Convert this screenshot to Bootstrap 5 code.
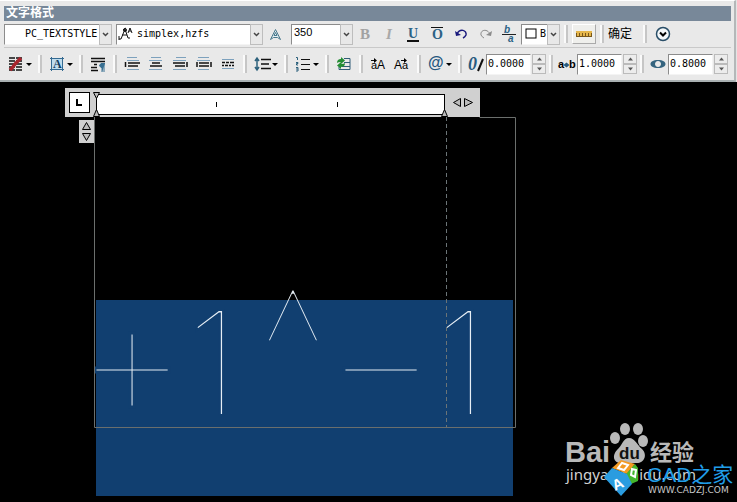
<!DOCTYPE html>
<html lang="zh-CN">
<head>
<meta charset="utf-8">
<meta name="viewport" content="width=device-width, initial-scale=1">
<title>文字格式</title>
<link href="https://cdn.jsdelivr.net/npm/bootstrap@5.3.0/dist/css/bootstrap.min.css" rel="stylesheet">
<style>
body{background:#000;font:12px/16px "Liberation Sans","Noto Sans CJK SC",sans-serif;color:#000}
.panel{background:#e9e9e9;border-bottom:2px solid #a9b0b2;border-right:2px solid #b4b8b9;margin-right:1px;padding:5px 3px 0 4px;border-top:1px solid #fff}
.dock{background:#e4e4e4}
.titlebar{background:#788899;color:#fff;font-size:12px;font-weight:700;height:15px;line-height:15px;padding-left:2px;margin:0}
.bar1{height:27px;border-bottom:1px solid #c9c9c9}
.bar2{height:32px}
.tool{border:0;background:none;padding:0;width:24px;height:24px;flex:none;display:flex;align-items:center;justify-content:center;color:#000}
.tool.split{width:31px}
.tool.raised{border:1px solid;border-color:#fff #aaa #aaa #fff;height:20px;background:#efefec}
.rule{width:10px;flex:none;height:18px;display:flex;justify-content:center}
.rule::before{content:"";width:4px;background:#fafafa;border-right:2px solid #c6c6c6}
.rule.wide{width:12px}
.combo{display:grid;flex:none;height:21px}
.combo>*{grid-area:1/1}
.combo select{appearance:none;border:1px solid;border-color:#8c8c8c #f4f4f4 #f4f4f4 #8c8c8c;background:#fff;border-radius:0;padding:0 13px 0 20px;font:10px/18px "DejaVu Sans Mono",monospace;color:#000;width:100%;min-width:0;overflow:hidden}
.arrow{justify-self:end;width:13px;background:#e8e8e8;border:1px solid #bdbdbd;pointer-events:none;display:flex;align-items:center;justify-content:center}
.lead-icon{justify-self:start;align-self:center;margin-left:2px;pointer-events:none}
.w-style{width:108px}.w-font{width:147px}.w-size{width:62px}.w-color{width:39px}
.combo.w-size select{padding-left:2px;font:11px/14px "Liberation Sans",sans-serif;padding-bottom:4px}
.combo.w-color select{padding-left:18px}
.numlabel{width:21px;flex:none;display:flex;justify-content:center;align-items:center}
.num{width:45px;height:21px;border:1px solid;border-color:#8c8c8c #f4f4f4 #f4f4f4 #8c8c8c;background:#fff;padding:0 0 1px 1px;font:10px/18px "DejaVu Sans Mono",monospace;color:#000;border-radius:0;flex:none}
.spin{width:15px;flex:none;display:flex;flex-direction:column;padding-left:1px}
.spin button{height:10px;padding:0;border:1px solid #bbb;background:#ececec;display:flex;align-items:center;justify-content:center}
.okbtn{border:0;background:none;padding:0;font-size:12px;color:#000;margin-right:7px;flex:none}
.ruler{background:#d0d0d0;margin:6px 0 0 65px;width:415px;height:29px;padding:4px}
.tabstop{width:21px;height:21px;border:1px solid #000;background:#fff;padding:0;display:flex;align-items:center;justify-content:center;flex:none}
.nudge{background:#d0d0d0;border:0;padding:0;display:flex}
.vnudge{background:#d0d0d0;width:15px;height:23px;margin:3px 0 0 79px;flex:none}
.glyphs{font-family:Inter,Roboto,sans-serif;font-weight:100;fill:#e6eef5;stroke:#113f70;stroke-width:2px}
.glyphs .op{font-size:180px;stroke-width:3px}
.glyphs .caret{font-size:172px;stroke:url(#edge);stroke-width:3px}
.brandmark{position:absolute;right:0;bottom:0}
svg{display:block;flex:none}
</style>
</head>
<body class="d-flex flex-column min-vh-100 position-relative overflow-hidden">
<header class="dock">
<div class="panel">
<h1 class="titlebar">文字格式</h1>
<div class="bar1 d-flex align-items-center" role="toolbar" aria-label="字符">
<div class="combo w-style"><select aria-label="样式"><option>PC_TEXTSTYLE</option></select><span class="arrow"><svg width="7" height="5"><path d="M1 1l2.500 2.500L6 1" fill="none" stroke="#444" stroke-width="1.500"/></svg></span></div>
<div class="combo w-font ms-1"><select aria-label="字体"><option>simplex,hzfs</option></select><svg class="lead-icon" width="15" height="15" fill="none" stroke="#111"><path d="M1 12h2l4-10 3 9h2M4 8h5M5 3l3-2M10 6l2-5 2 5M11 4h2M1 9v4"/><circle cx="7" cy="3" r="1.500"/></svg><span class="arrow"><svg width="7" height="5"><path d="M1 1l2.500 2.500L6 1" fill="none" stroke="#444" stroke-width="1.500"/></svg></span></div>
<button class="tool" aria-label="注释性"><svg width="13" height="13" fill="#e5f1f5" stroke="#49788c"><path d="M1.500 11.500L6.500 1.500l5 10-3-2h-4z"/><path d="M5 7.500h3l-1.500-3z"/></svg></button>
<div class="combo w-size ms-1"><select aria-label="高度"><option>350</option></select><span class="arrow"><svg width="7" height="5"><path d="M1 1l2.500 2.500L6 1" fill="none" stroke="#444" stroke-width="1.500"/></svg></span></div>
<button class="tool" disabled aria-label="粗体"><svg width="18" height="18"><text x="4" y="14" font-family="Liberation Serif,serif" font-size="15" font-weight="700" fill="#a2a2a2">B</text></svg></button>
<button class="tool" disabled aria-label="斜体"><svg width="18" height="18"><text x="6" y="14" font-family="Liberation Serif,serif" font-size="15" font-style="italic" font-weight="700" fill="#a8a8a8">I</text></svg></button>
<button class="tool" aria-label="下划线"><svg width="18" height="18"><text x="4" y="13" font-family="Liberation Serif,serif" font-size="14" font-weight="700" fill="#2c6286">U</text><path d="M3 16h12" stroke="#111" stroke-width="2"/></svg></button>
<button class="tool" aria-label="上划线"><svg width="18" height="20"><path d="M3 3.500h12" stroke="#111" stroke-width="1"/><text x="4" y="15" font-family="Liberation Serif,serif" font-size="14" font-weight="700" fill="#2c6286">O</text></svg></button>
<button class="tool" aria-label="放弃"><svg width="15" height="12" fill="none" stroke="#19197c" stroke-width="1.500"><path d="M3 6C6 0 13 2 12 7q-1 2-3 3"/><path d="M1 3l1 5 5-1z" fill="#19197c" stroke="none"/></svg></button>
<button class="tool" aria-label="重做"><svg width="15" height="12" fill="none" stroke="#8b8b8b"><path d="M12 6C9 0 2 2 3 7q1 2 3 3"/><path d="M14 3l-1 5-5-1z" fill="#8b8b8b" stroke="none"/></svg></button>
<button class="tool" aria-label="堆叠"><svg width="20" height="22" font-family="Liberation Sans,sans-serif" font-size="10" font-style="italic" font-weight="700"><text x="5" y="10" fill="#2c6286">b</text><text x="9" y="19" fill="#2c6286">a</text><path d="M3 11.500h14" stroke="#222"/></svg></button>
<div class="combo w-color"><select aria-label="颜色"><option>ByLayer</option></select><svg class="lead-icon ms-1" width="12" height="12"><rect x="1" y="1" width="10" height="9" fill="#fff" stroke="#000"/></svg><span class="arrow"><svg width="7" height="5"><path d="M1 1l2.500 2.500L6 1" fill="none" stroke="#444" stroke-width="1.500"/></svg></span></div>
<span class="rule wide"></span>
<button class="tool raised" aria-label="标尺"><svg width="18" height="8"><rect x="1" y="1" width="16" height="5" fill="#e5b64b"/><path d="M1 6.500h16M1.500 3v4M4.500 3v4M7.500 3v4M10.500 3v4M13.500 3v4M16.500 3v4" stroke="#78571b"/></svg></button>
<span class="rule wide"></span>
<button class="okbtn">确定</button>
<span class="rule wide"></span>
<button class="tool" aria-label="选项"><svg width="16" height="16" fill="none"><circle cx="8" cy="8" r="6.500" stroke="#294e68" fill="#f3f7f9" stroke-width="1.500"/><path d="M5 6.500l3 3 3-3" stroke="#000" stroke-width="2"/></svg></button>
</div>
<div class="bar2 d-flex align-items-center" role="toolbar" aria-label="段落">
<button class="tool split" aria-label="列"><svg width="24" height="16"><path d="M1 2h6m1 0h6M1 5h6m1 0h6M1 8h6m1 0h6M1 11h6m1 0h6M1 14h6m1 0h6" stroke="#111" stroke-width="1.500"/><path d="M2 14l3-3 2-3 6-6" stroke="#a8242d" stroke-width="3.500" fill="none"/><path d="M18 7h6l-3 3z"/></svg></button>
<span class="rule"></span>
<button class="tool split" aria-label="多行文字对正"><svg width="24" height="16"><rect x="2" y="2" width="12" height="12" fill="#bfdced"/><path d="M1 2.500h14M1 13.500h14M2.500 1v14M13.500 1v14" stroke="#346a91"/><text x="4" y="12" font-family="Liberation Serif,serif" font-weight="700" font-size="12" fill="#123d5d">A</text><path d="M18 7h6l-3 3z"/></svg></button>
<span class="rule"></span>
<button class="tool" aria-label="段落"><svg width="16" height="15"><path d="M1 1.500h14M1 4.500h14M4 7.500h3M1 10.500h6M1 13.500h7" stroke="#111" stroke-width="1.500"/><path d="M15 6.500h-4q-3 2 0 4h1V15m2-8v8" stroke="#397092" fill="#397092" stroke-width="1"/></svg></button>
<span class="rule"></span>
<button class="tool" aria-label="左对齐"><svg width="16" height="16"><path d="M3 1.500h10M3 4.500h12M3 13.500h12" stroke="#7da1bd"/><path d="M4 7h12M4 10h10M1.500 6v5" stroke="#111" stroke-width="1.500"/></svg></button>
<button class="tool" aria-label="居中"><svg width="16" height="16"><path d="M3 1.500h10M1 4.500h13M1 13.500h13" stroke="#7da1bd"/><path d="M4 7h8M2 10h12" stroke="#111" stroke-width="1.500"/></svg></button>
<button class="tool" aria-label="右对齐"><svg width="16" height="16"><path d="M4 1.500h10M1 4.500h13M1 13.500h13" stroke="#7da1bd"/><path d="M1 7h12M3 10h10M15 6v5" stroke="#111" stroke-width="1.500"/></svg></button>
<button class="tool" aria-label="对正"><svg width="16" height="16"><path d="M2 1.500h11M1 4.500h13M2 13.500h11" stroke="#7da1bd"/><path d="M3 7h10M3 10h10M1 6v5M15 6v5" stroke="#111" stroke-width="1.500"/></svg></button>
<button class="tool" aria-label="分布"><svg width="16" height="16"><path d="M2 3.500h12M2 12.500h12" stroke="#7da1bd"/><path d="M2 6.500h3m1 0h3m1 0h4M2 9.500h2m1 0h3m1 0h2m1 0h2" stroke="#111" stroke-width="1.500"/></svg></button>
<span class="rule"></span>
<button class="tool split" aria-label="行距"><svg width="24" height="16"><path d="M3 2v12M1 5l2-3 2 3M1 11l2 3 2-3" stroke="#2d617c" fill="none" stroke-width="1.500"/><path d="M7 3.500h10M7 8h8M7 12.500h10" stroke="#111" stroke-width="1.500"/><path d="M18 7h6l-3 3z"/></svg></button>
<span class="rule"></span>
<button class="tool split" aria-label="编号"><svg width="24" height="16"><path d="M1 1.500h1.500V4M1 6.500h2v1H1.500V9H3M1 11.500h2V15H1M1 13h2" stroke="#2d617c" fill="none"/><path d="M6 3.500h9M6 8.500h9M6 13.500h9" stroke="#111"/><path d="M18 7h6l-3 3z"/></svg></button>
<span class="rule"></span>
<button class="tool" aria-label="插入字段"><svg width="16" height="16"><path d="M8 2.500h6v11H3V11M8 6.500h6M6 10.500h8" stroke="#315d78" fill="none"/><path d="M1 7q0-4 4-4V1l4 3.500L5 8V6Q2 6 1 7zM9 7q0 4-4 4v2L1 9.500 5 6v2q3 0 4-1z" fill="#258d35"/></svg></button>
<span class="rule"></span>
<button class="tool" aria-label="大写"><svg width="18" height="16" font-family="Liberation Sans,sans-serif"><text x="2" y="13" font-size="11">a</text><text x="8" y="13" font-size="12">A</text><path d="M2 4.500h4" stroke="#111"/><path d="M5 2v5l3-2.500z"/></svg></button>
<button class="tool" aria-label="小写"><svg width="18" height="16" font-family="Liberation Sans,sans-serif"><text x="1" y="13" font-size="12">A</text><text x="9" y="13" font-size="11">a</text><path d="M8 4.500h4" stroke="#111"/><path d="M11 2v5l3-2.500z"/></svg></button>
<span class="rule"></span>
<button class="tool split" aria-label="符号"><svg width="24" height="20"><text x="0" y="14" font-family="Liberation Sans,sans-serif" font-size="16" font-weight="700" fill="#255780">@</text><path d="M18 9h6l-3 3z"/></svg></button>
<span class="rule"></span>
<label class="numlabel" for="oblique" aria-label="倾斜角度"><svg width="19" height="22"><text x="2" y="17" font-family="Liberation Serif,serif" font-style="italic" font-weight="700" font-size="18" fill="#285a7e">0</text><path d="M12 18l5-12" stroke="#111" stroke-width="2"/></svg></label>
<input class="num" id="oblique" value="0.0000">
<div class="spin"><button aria-label="增加"><svg width="7" height="4"><path d="M1 3.500l2.500-3 2.500 3z" fill="#555"/></svg></button><button aria-label="减少"><svg width="7" height="4"><path d="M1 .5l2.500 3 2.500-3z" fill="#555"/></svg></button></div>
<span class="rule"></span>
<label class="numlabel" for="tracking" aria-label="追踪"><svg width="19" height="16"><text x="1" y="12" font-family="Liberation Sans,sans-serif" font-size="11" font-weight="700">a</text><text x="12" y="12" font-family="Liberation Sans,sans-serif" font-size="11" font-weight="700">b</text><path d="M6.500 9l3-2.500v5zM12.500 9l-3-2.500v5z" fill="#285a7e"/></svg></label>
<input class="num" id="tracking" value="1.0000">
<div class="spin"><button aria-label="增加"><svg width="7" height="4"><path d="M1 3.500l2.500-3 2.500 3z" fill="#555"/></svg></button><button aria-label="减少"><svg width="7" height="4"><path d="M1 .5l2.500 3 2.500-3z" fill="#555"/></svg></button></div>
<span class="rule"></span>
<label class="numlabel" for="widthfactor" aria-label="宽度因子"><svg width="16" height="12"><path fill-rule="evenodd" d="M8 2C-2 2-2 10 8 10S18 2 8 2zm0 1c4 0 4 6 0 6S4 3 8 3z" fill="#35647f"/></svg></label>
<input class="num" id="widthfactor" value="0.8000">
<div class="spin"><button aria-label="增加"><svg width="7" height="4"><path d="M1 3.500l2.500-3 2.500 3z" fill="#555"/></svg></button><button aria-label="减少"><svg width="7" height="4"><path d="M1 .5l2.500 3 2.500-3z" fill="#555"/></svg></button></div>
</div>
</div>
</header>
<main>
<div class="ruler d-flex">
<button class="tabstop" aria-label="制表符"><svg width="7" height="8"><path d="M1 0v6h5" fill="none" stroke="#000" stroke-width="2"/></svg></button>
<svg width="350" height="27" viewBox="94 90 350 27" class="ms-1 overflow-visible"><rect x="96.500" y="92.500" width="348" height="20" fill="#fff" stroke="#000"/><path d="M216.500 100v5M337.500 100v5" stroke="#000"/><path d="M93.500 90.500h6l-3 6zM96.500 107.500l3 7h-6zM444.500 107.500l3 7h-6z" fill="#bbb" stroke="#000"/></svg>
<button class="nudge align-self-center ms-2" aria-label="调整宽度"><svg width="23" height="11" fill="#bbb" stroke="#000"><path d="M8.500 1.500v8l-7-4zM12.500 1.500v8l8-4z"/></svg></button>
</div>
<div class="d-flex align-items-start">
<button class="nudge vnudge" aria-label="调整高度"><svg width="15" height="23" fill="#bbb" stroke="#000"><path d="M7.500 2.500l4 7h-8zM3.500 13.500h8l-4 7z"/></svg></button>
<svg width="422" height="384" viewBox="94 117 422 384" role="img" aria-label="文字编辑区">
<defs><linearGradient id="edge" gradientUnits="userSpaceOnUse" x1="0" y1="299" x2="0" y2="301"><stop offset=".5" stop-color="#000"/><stop offset=".5" stop-color="#113f70"/></linearGradient></defs>
<rect x="96" y="300" width="417" height="196" fill="#113f70"/>
<g class="glyphs" text-anchor="middle"><text class="op" x="132" y="421">+</text><text x="213" y="415" font-size="144">1</text><text class="caret" x="293" y="410">^</text><text class="op" x="381" y="421">−</text><text x="462" y="415" font-size="144">1</text></g>
<path d="M94.500 117v310.500h421V117.500h-36" fill="none" stroke="#6b6f6d"/>
<path d="M446.500 117v310" stroke="#6b7477" stroke-dasharray="4 3"/>
</svg>
</div>
</main>
<svg class="brandmark" width="182" height="92" viewBox="555 410 182 92" role="img" aria-label="百度经验 CAD之家" font-family="Liberation Sans,Noto Sans CJK SC,sans-serif">
<g fill="#b9b9b9"><text x="565" y="462" font-size="29" font-weight="700">Bai</text><text x="650" y="460" font-size="22" font-weight="700">经验</text>
<ellipse cx="615" cy="438" rx="5" ry="6"/><ellipse cx="625" cy="429" rx="5" ry="6"/><ellipse cx="638" cy="429" rx="5" ry="6"/><ellipse cx="643" cy="441" rx="5" ry="6"/><path d="M629 438c6 0 8 7 13 11 6 6 2 14-5 14h-16c-8 0-9-8-4-13 5-4 6-12 12-12z"/></g>
<text x="619" y="459" font-size="17" font-weight="700" fill="#111">du</text>
<text x="566" y="480" font-family="Noto Sans,sans-serif" font-size="15" fill="#d2d2d2">jingyan.baidu.com</text>
<path d="M612 468l9-8 14 4-8 10z" fill="#f39a22"/><path d="M635 464l3 4v13l-7 3-5-10z" fill="#43b52c"/><path d="M604 477l8-9 15 6 5 10-11 12z" fill="#2a9ce0"/><path d="M618 468l4-5 6 2-4 5z" fill="none" stroke="#fff" stroke-width="2"/><path d="M631 475l1-6 4 1-1 7z" fill="none" stroke="#fff" stroke-width="2"/><text x="612" y="489" font-size="15" font-weight="700" fill="#fff" transform="rotate(-25 618 483)">A</text>
<text x="647" y="482" font-size="21" fill="#209ee9">CAD之家</text>
<text x="648" y="493" font-size="9" font-family="DejaVu Sans,sans-serif" fill="#c7c7c7">WWW.CADZJ.COM</text>
</svg>
<script src="https://cdn.jsdelivr.net/npm/bootstrap@5.3.0/dist/js/bootstrap.bundle.min.js"></script>
</body>
</html>
